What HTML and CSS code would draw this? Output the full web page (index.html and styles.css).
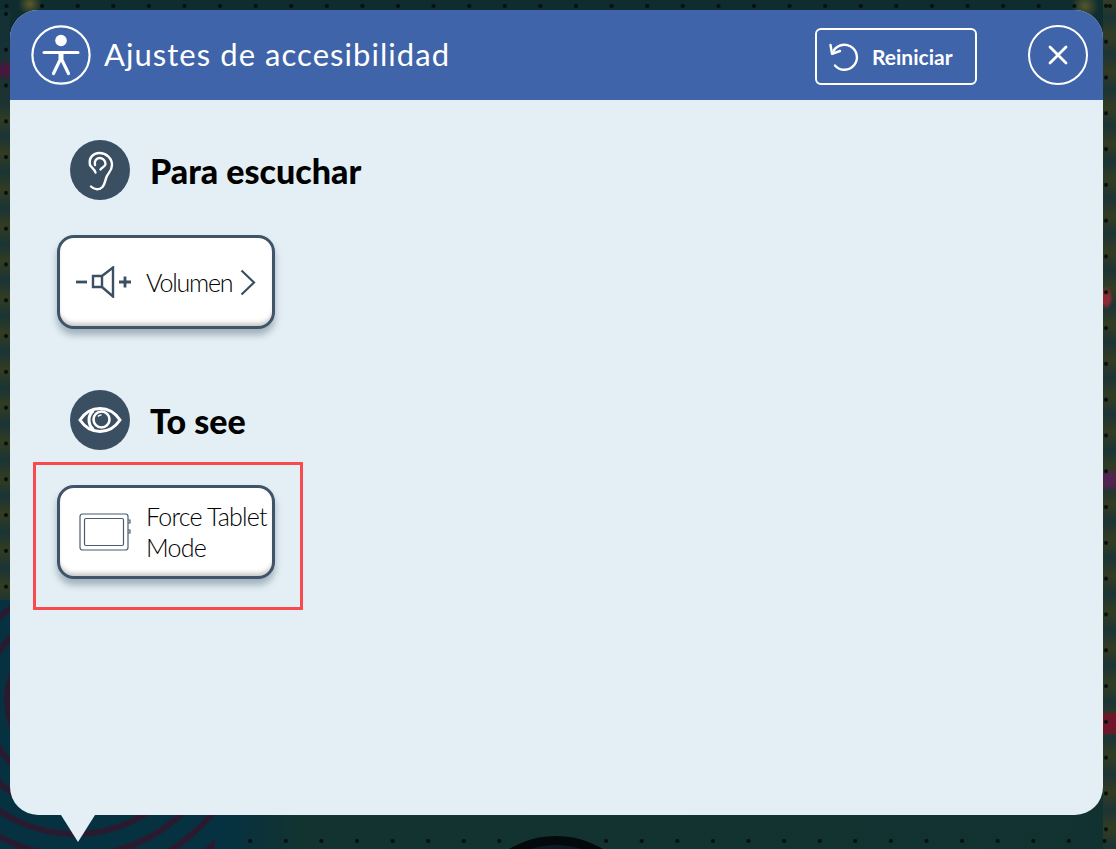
FILE: index.html
```html
<!DOCTYPE html>
<html lang="es">
<head>
    <meta charset="UTF-8">
    <meta name="viewport" content="width=device-width, initial-scale=1.0">
    <title>Ajustes de accesibilidad</title>
    <link rel="stylesheet" href="styles.css">
</head>
<body>
    <!-- Game board behind the dialog -->
    <div class="board">
        <div class="side-left"></div>
        <div class="side-right"></div>
        <div class="dots-top"></div>
        <div class="dots-bottom"></div>
        <div class="hole"></div>
    </div>

    <div class="dialog">
        <header class="dialog-header">
            <svg class="header-icon" viewBox="0 0 60 60" fill="none" stroke="#fff" stroke-width="2.2">
                <circle cx="30" cy="30" r="28.6"/>
                <circle cx="30" cy="15.500" r="5.800" fill="#fff" stroke="none"/>
                <path d="M13 27.500h34" stroke-width="3" stroke-linecap="round"/>
                <path d="M30 27v7" stroke-width="5"/>
                <path d="M30 33l-7.500 15.500M30 33l7.500 15.500" stroke-width="3.200" stroke-linecap="round"/>
            </svg>
            <h1 class="dialog-title">Ajustes de accesibilidad</h1>
            <button class="reset-button">
                <svg class="reset-icon" viewBox="0 0 32 32" fill="none" stroke="#fff" stroke-width="2.4" stroke-linecap="round" stroke-linejoin="round">
                    <path d="M3.500 13.500A12.500 12.500 0 1 1 6 25.500"/>
                    <path d="M1.500 5 3 13.800 11 11"/>
                </svg>
                Reiniciar
            </button>
            <button class="close-button">
                <svg viewBox="0 0 20 20" width="20" height="20" stroke="#fff" stroke-width="2.800" stroke-linecap="round">
                    <path d="M2 2l16 16M18 2 2 18"/>
                </svg>
            </button>
        </header>

        <main class="dialog-body">
            <section class="group">
                <div class="group-title">
                    <span class="group-icon">
                        <svg viewBox="0 0 60 60" width="60" height="60" fill="none" stroke="#fff" stroke-width="2.400" stroke-linecap="round" stroke-linejoin="round">
                            <path d="M20 25c-1.500-7 3-12 9.500-12S42 18 42 25c0 6-4 8-5.500 12-1.500 4-1.500 7-4 10-3 3-8 3-11.500-.5"/>
                            <path d="M20 25c1.500 3 4.500 4 5.500 7.500"/>
                            <path d="M25 25c-1-4 1.500-7 4.500-7s6 2.500 6 6c0 3-4 3-5 5.500"/>
                        </svg>
                    </span>
                    <h2>Para escuchar</h2>
                </div>
                <button class="option-card">
                    <svg class="volume-icon" viewBox="0 0 56 32" fill="none" stroke="#3b4f63" stroke-width="2.400">
                        <path d="M1 16h11" stroke-width="2.800"/>
                        <path d="M18 10h9v11h-9zM27 10l11-8.500v29L27 21"/>
                        <path d="M44 16h12M50 10.500v11" stroke-width="2.800"/>
                    </svg>
                    <span class="option-label">Volumen</span>
                    <svg class="chevron" viewBox="0 0 16 27" fill="none" stroke="#3b4f63" stroke-width="2.200">
                        <path d="M1.500 1.500 14 13.500 1.500 25.500"/>
                    </svg>
                </button>
            </section>

            <section class="group">
                <div class="group-title">
                    <span class="group-icon">
                        <svg viewBox="0 0 60 60" width="60" height="60" fill="none" stroke="#fff">
                            <path d="M10 30c5-7.500 12-11.500 20-11.500S45 22.500 50 30c-5 7.500-12 11.500-20 11.500S15 37.500 10 30z" stroke-width="3"/>
                            <path d="M23.500 20.500c-6 5-6 14 0 19" stroke-width="3"/>
                            <circle cx="31.500" cy="29.500" r="8" stroke-width="2.600"/>
                            <path d="M28 26.500a4 4 0 0 1 3.500-1.500" stroke-width="1.600"/>
                        </svg>
                    </span>
                    <h2>To see</h2>
                </div>
                <div class="highlight">
                    <button class="option-card">
                        <svg class="tablet-icon" viewBox="0 0 52 38" fill="none" stroke="#4a5d70" stroke-width="1.200">
                            <rect x="1" y="1" width="48" height="36" rx="2.500"/>
                            <rect x="5.500" y="5.500" width="39" height="27" rx="1.500"/>
                            <path d="M49 7h2v3h-2M49 17h2v3h-2"/>
                        </svg>
                        <span class="option-label">Force Tablet<br>Mode</span>
                    </button>
                </div>
            </section>
        </main>
        <div class="dialog-tail"></div>
    </div>
</body>
</html>
```

FILE: styles.css
```css
html, body {
    height: 100%;
}

body {
    margin: 0;
    font-family: "Lato", "Liberation Sans", sans-serif;
}

.board {
    position: absolute;
    left: 0;
    top: 0;
    right: 0;
    bottom: 0;
    overflow: hidden;
    background-color: #0f2c2e;
    background-image:
        radial-gradient(circle at 30px 4px, #5c5a2a 0, transparent 12px),
        radial-gradient(circle at 1085px 6px, #55562c 0, transparent 14px),
        repeating-radial-gradient(circle at 75px 100px, #2a1a30 0, #2a1a30 4px, transparent 6px, transparent 20px, #2a1a30 22px),
        linear-gradient(90deg, #053141 0, #053141 225px, #123330 300px, #113230 100%);
    background-size: 100% 100%, 100% 100%, 215px 249px, 100% 249px;
    background-position: 0 0, 0 0, 0 600px, 0 600px;
    background-repeat: no-repeat;
}

.side-left {
    position: absolute;
    left: 0;
    top: 10px;
    width: 10px;
    height: 590px;
    background-color: #2d3a24;
    background-image:
        radial-gradient(circle, #05100f 0, #05100f 1.500px, transparent 2.500px),
        radial-gradient(ellipse 9px 10px at 5px 60px, #46183e 0, #46183e 50%, transparent 100%),
        linear-gradient(180deg, #123036 0, #1d3232 85px, transparent 110px),
        repeating-linear-gradient(180deg, #333c20 0, #1a3436 18px, #333c20 36px);
    background-size: 12px 35.800px, 100% 100%, 100% 100%, 100% 100%;
    background-position: 0 -14px, 0 0, 0 0, 0 0;
    background-repeat: repeat-y, no-repeat, no-repeat, no-repeat;
}

.side-right {
    position: absolute;
    left: 1103px;
    top: 0;
    width: 13px;
    height: 849px;
    background-color: #2c3a28;
    background-image:
        radial-gradient(circle, #05100f 0, #05100f 1.500px, transparent 2.500px),
        radial-gradient(ellipse 7px 12px at 3px 298px, #8c2a36 0, #8c2a36 50%, transparent 100%),
        radial-gradient(ellipse 12px 12px at 6px 480px, #51234f 0, #51234f 50%, transparent 100%),
        linear-gradient(180deg, transparent 712px, #70162a 714px, #70162a 733px, transparent 735px),
        repeating-linear-gradient(180deg, #333c22 0, #1c3434 18px, #333c22 36px);
    background-size: 12px 35.800px, 100% 100%, 100% 100%, 100% 100%, 100% 100%;
    background-position: -3px -12px, 0 0, 0 0, 0 0, 0 0;
    background-repeat: repeat-y, no-repeat, no-repeat, no-repeat, no-repeat;
}

.dots-top,
.dots-bottom {
    position: absolute;
    height: 12px;
    background-image: radial-gradient(circle, #05100f 0, #05100f 1.500px, transparent 2.500px);
    background-size: 35.600px 12px;
    background-repeat: repeat-x;
}

.dots-top {
    left: 0;
    right: 0;
    top: 0;
    background-position: -11.300px 0;
}

.dots-bottom {
    left: 240px;
    right: 0;
    top: 835px;
    background-position: -7.600px 0;
}

.hole {
    position: absolute;
    left: 465px;
    top: 836px;
    width: 182px;
    height: 182px;
    box-sizing: border-box;
    border-radius: 50%;
    background-color: #0b1a26;
    border: 9px solid #04090c;
}

.dialog {
    position: absolute;
    left: 10px;
    top: 10px;
    width: 1093px;
    height: 805px;
    background-color: #e3eff4;
    border-radius: 28px;
    display: flex;
    flex-direction: column;
}

.dialog-tail {
    position: absolute;
    left: 51px;
    top: 805px;
    width: 0;
    height: 0;
    border-left: 17px solid transparent;
    border-right: 17px solid transparent;
    border-top: 27px solid #e3eff4;
}

.dialog-header {
    height: 90px;
    flex-shrink: 0;
    background-color: #3f64a9;
    border-radius: 28px 28px 0 0;
    display: flex;
    align-items: center;
    box-sizing: border-box;
    padding: 0 15px 0 21px;
}

.header-icon {
    width: 60px;
    height: 60px;
    margin-right: 13px;
}

.dialog-title {
    margin: 0 0 3px;
    flex: 1;
    color: #fff;
    font-size: 31px;
    font-weight: 400;
    letter-spacing: 1.050px;
}

.reset-button {
    width: 162px;
    height: 57px;
    margin-top: 2px;
    margin-right: 51px;
    padding: 0 0 0 12px;
    display: flex;
    align-items: center;
    gap: 11px;
    background: none;
    border: 2px solid #fff;
    border-radius: 6px;
    color: #fff;
    font-family: inherit;
    font-size: 21px;
    font-weight: 700;
}

.reset-icon {
    width: 32px;
    height: 32px;
}

.close-button {
    width: 60px;
    height: 60px;
    padding: 0;
    display: flex;
    align-items: center;
    justify-content: center;
    background: none;
    border: 2px solid #fff;
    border-radius: 50%;
}

.dialog-body {
    padding: 40px 0 0 47px;
}

.group {
    margin-bottom: 61px;
}

.group:last-child {
    margin-bottom: 0;
}

.group-title {
    display: flex;
    align-items: center;
    margin-left: 13px;
    gap: 20px;
    height: 60px;
}

.group-title h2 {
    margin: 0;
    color: #000;
    font-size: 34px;
    font-weight: 900;
}

.group-icon {
    width: 60px;
    height: 60px;
    border-radius: 50%;
    background-color: #3b4f63;
    display: block;
}

.option-card {
    width: 218px;
    height: 94px;
    margin-top: 35px;
    padding: 0;
    display: flex;
    align-items: center;
    box-sizing: border-box;
    background: #fff;
    border: 3px solid #3f5369;
    border-radius: 17px;
    box-shadow: inset 0 -5px 4px -2px #c9c9c9, 0 6px 7px rgba(40, 60, 80, 0.35);
    font-family: inherit;
    text-align: left;
    color: #000;
}

.option-label {
    font-size: 25px;
    line-height: 31px;
    font-weight: 300;
    letter-spacing: -1.200px;
    white-space: nowrap;
}

.volume-icon {
    width: 56px;
    height: 32px;
    margin: 0 15px 0 15px;
}

.chevron {
    width: 16px;
    height: 27px;
    margin-left: 8px;
}

.highlight {
    width: 270px;
    height: 148px;
    margin: 12px 0 0 -24px;
    padding: 20px 0 0 21px;
    box-sizing: border-box;
    border: 3px solid #f94a4f;
}

.highlight .option-card {
    margin-top: 0;
}

.highlight .option-label {
    letter-spacing: -0.800px;
}

.tablet-icon {
    width: 52px;
    height: 38px;
    margin: 0 15px 0 19px;
}
```
